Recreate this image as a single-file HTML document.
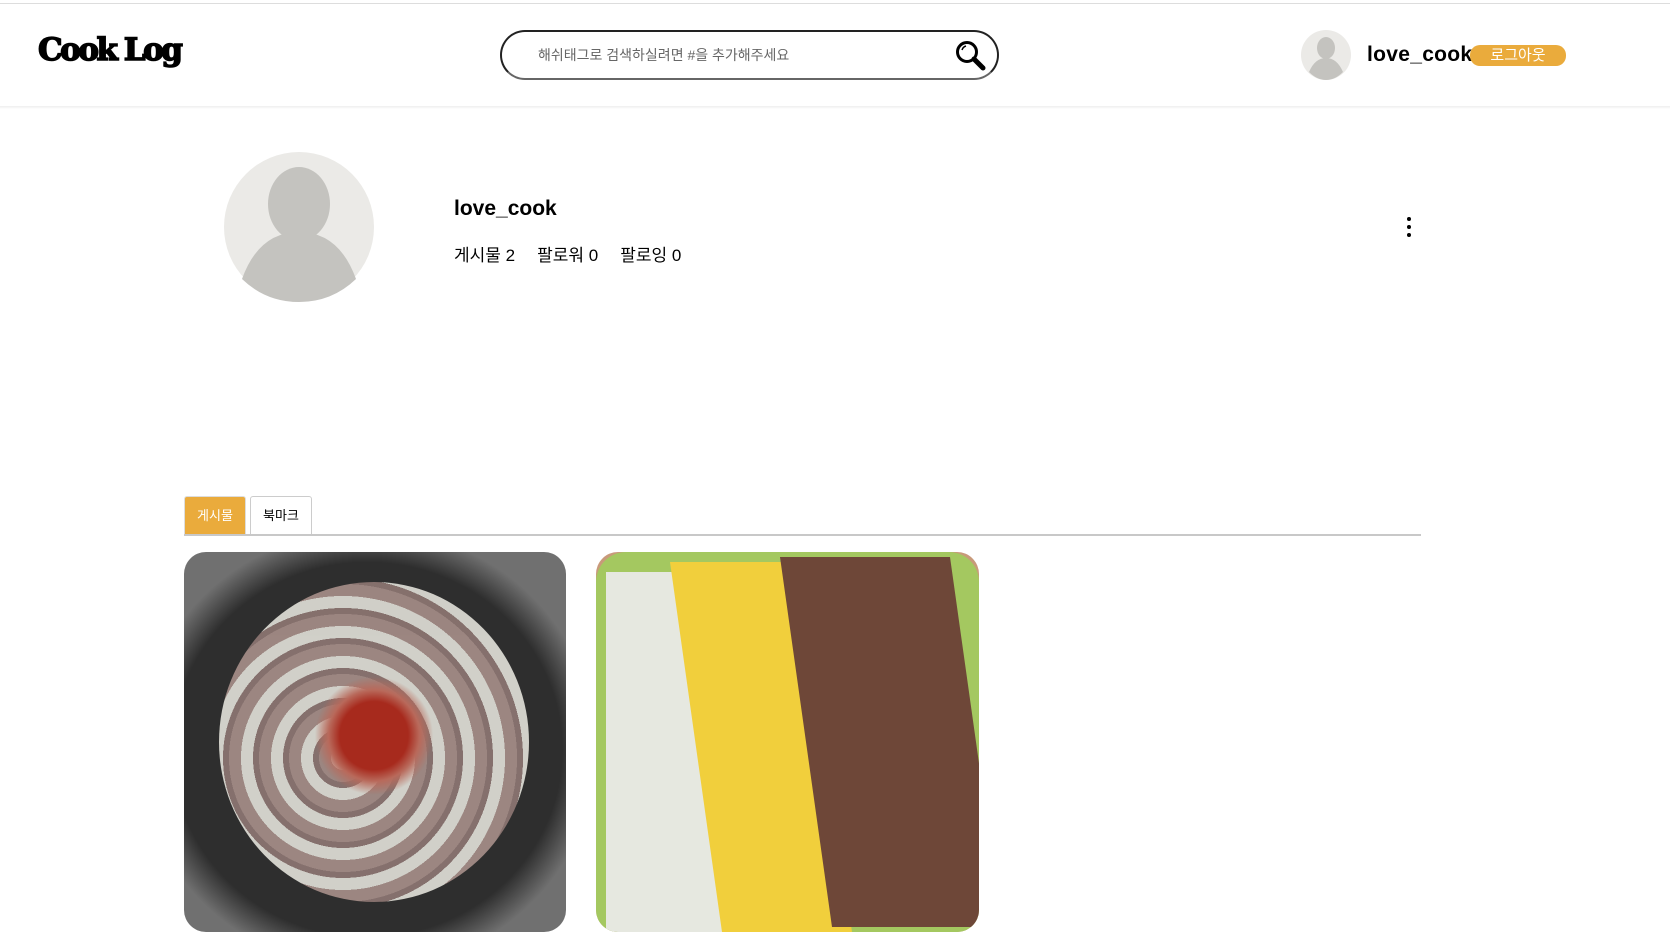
<!DOCTYPE html>
<html><head><meta charset="utf-8"><style>
*{margin:0;padding:0;box-sizing:border-box}
body{width:1670px;height:917px;overflow:hidden;background:#fff;font-family:"Liberation Sans","Noto Sans CJK KR",sans-serif;position:relative}
.abs{position:absolute}
</style></head><body>
<div class="abs" style="left:0;top:3px;width:1670px;height:1px;background:#ddd"></div>
<div class="abs" style="left:0;top:106px;width:1670px;height:3px;background:linear-gradient(#eee,#fff)"></div>
<div class="abs" style="left:38px;top:32px;font-family:'DejaVu Serif',serif;font-weight:900;font-size:31px;letter-spacing:-2.5px;color:#000;-webkit-text-stroke:1.5px #000">Cook Log</div>
<div class="abs" style="left:500px;top:30px;width:499px;height:50px;border:2px solid #222;border-bottom-color:#666;border-radius:25px"></div>
<div class="abs" style="left:538px;top:45px;font-size:14px;color:#666">해쉬태그로 검색하실려면 #을 추가해주세요</div>
<svg class="abs" style="left:955px;top:40px" width="32" height="32" viewBox="0 0 32 32"><circle cx="12" cy="12" r="9.5" fill="none" stroke="#000" stroke-width="3"/><path d="M19 19 L28 28" stroke="#000" stroke-width="5" stroke-linecap="round"/><path d="M7 10 A6 6 0 0 1 11 6" stroke="#000" stroke-width="1.5" fill="none"/></svg>
<svg class="abs" style="left:1301px;top:30px" width="50" height="50" viewBox="0 0 50 50"><ellipse cx="25" cy="25" rx="25" ry="25" fill="#ebeae7"/><ellipse cx="25" cy="18" rx="9" ry="11" fill="#c4c3bf"/><path d="M8 42 Q14 28 25 28 Q36 28 42 42 Q34 50 25 50 Q16 50 8 42Z" fill="#c4c3bf"/></svg>
<div class="abs" style="left:1367px;top:43px;font-size:21px;font-weight:600;color:#000;letter-spacing:0.3px">love_cook</div>
<div class="abs" style="left:1470px;top:45px;width:96px;height:21px;border-radius:10px;background:#eaab3c;color:#fff;font-size:15px;text-align:center;line-height:21px">로그아웃</div>
<svg class="abs" style="left:224px;top:152px" width="150" height="150" viewBox="0 0 150 150"><circle cx="75" cy="75" r="75" fill="#ebeae7"/><ellipse cx="75" cy="52" rx="31" ry="37" fill="#c4c3bf"/><path d="M18 127 Q35 80 75 80 Q115 80 132 127 Q108 150 75 150 Q42 150 18 127Z" fill="#c4c3bf"/></svg>
<div class="abs" style="left:454px;top:197px;font-size:21px;font-weight:bold;color:#000">love_cook</div>
<div class="abs" style="left:454px;top:241px;font-size:17px;color:#000"><span>게시물 2</span><span style="margin-left:22px">팔로워 0</span><span style="margin-left:22px">팔로잉 0</span></div>
<div class="abs" style="left:1407px;top:217px;width:4px">
<div style="width:4px;height:4px;border-radius:2px;background:#000;margin-bottom:4px"></div><div style="width:4px;height:4px;border-radius:2px;background:#000;margin-bottom:4px"></div><div style="width:4px;height:4px;border-radius:2px;background:#000"></div></div>
<div class="abs" style="left:184px;top:496px;width:62px;height:39px;background:#eaab3c;border:1px solid #ddd;border-radius:3px 3px 0 0;color:#fff;font-size:13px;text-align:center;line-height:37px">게시물</div>
<div class="abs" style="left:250px;top:496px;width:62px;height:39px;background:#fff;border:1px solid #ccc;border-radius:3px 3px 0 0;color:#000;font-size:13px;text-align:center;line-height:37px">북마크</div>
<div class="abs" style="left:184px;top:534px;width:1237px;height:2px;background:#c8c8c8"></div>
<div class="abs" style="left:184px;top:552px;width:382px;height:380px;border-radius:22px;overflow:hidden;background:radial-gradient(ellipse 60% 58% at 48% 52%,#2e2e2e 0%,#2e2e2e 85%,#707070 100%)">
<div class="abs" style="left:35px;top:30px;width:310px;height:320px;border-radius:50%;background:radial-gradient(circle at 50% 48%,#b52a1c 0 15%,#c87060 20%,transparent 26%),repeating-radial-gradient(circle at 40% 55%,#e3e2da 0 12px,#a8908a 12px 24px,#8f7874 24px 30px);opacity:.9"></div>
</div>
<div class="abs" style="left:596px;top:552px;width:383px;height:380px;border-radius:22px;overflow:hidden;background:#c89a7a">
<div class="abs" style="left:0;top:0;width:383px;height:380px;border-radius:30px 30px 0 0;background:#a4c860;"></div>
<div class="abs" style="left:10px;top:20px;width:120px;height:370px;background:#e6e8e0"></div>
<div class="abs" style="left:100px;top:10px;width:130px;height:370px;background:#f1cf3c;transform:skewX(8deg)"></div>
<div class="abs" style="left:210px;top:5px;width:170px;height:370px;background:#6e4738;transform:skewX(8deg)"></div>
</div>
</body></html>
